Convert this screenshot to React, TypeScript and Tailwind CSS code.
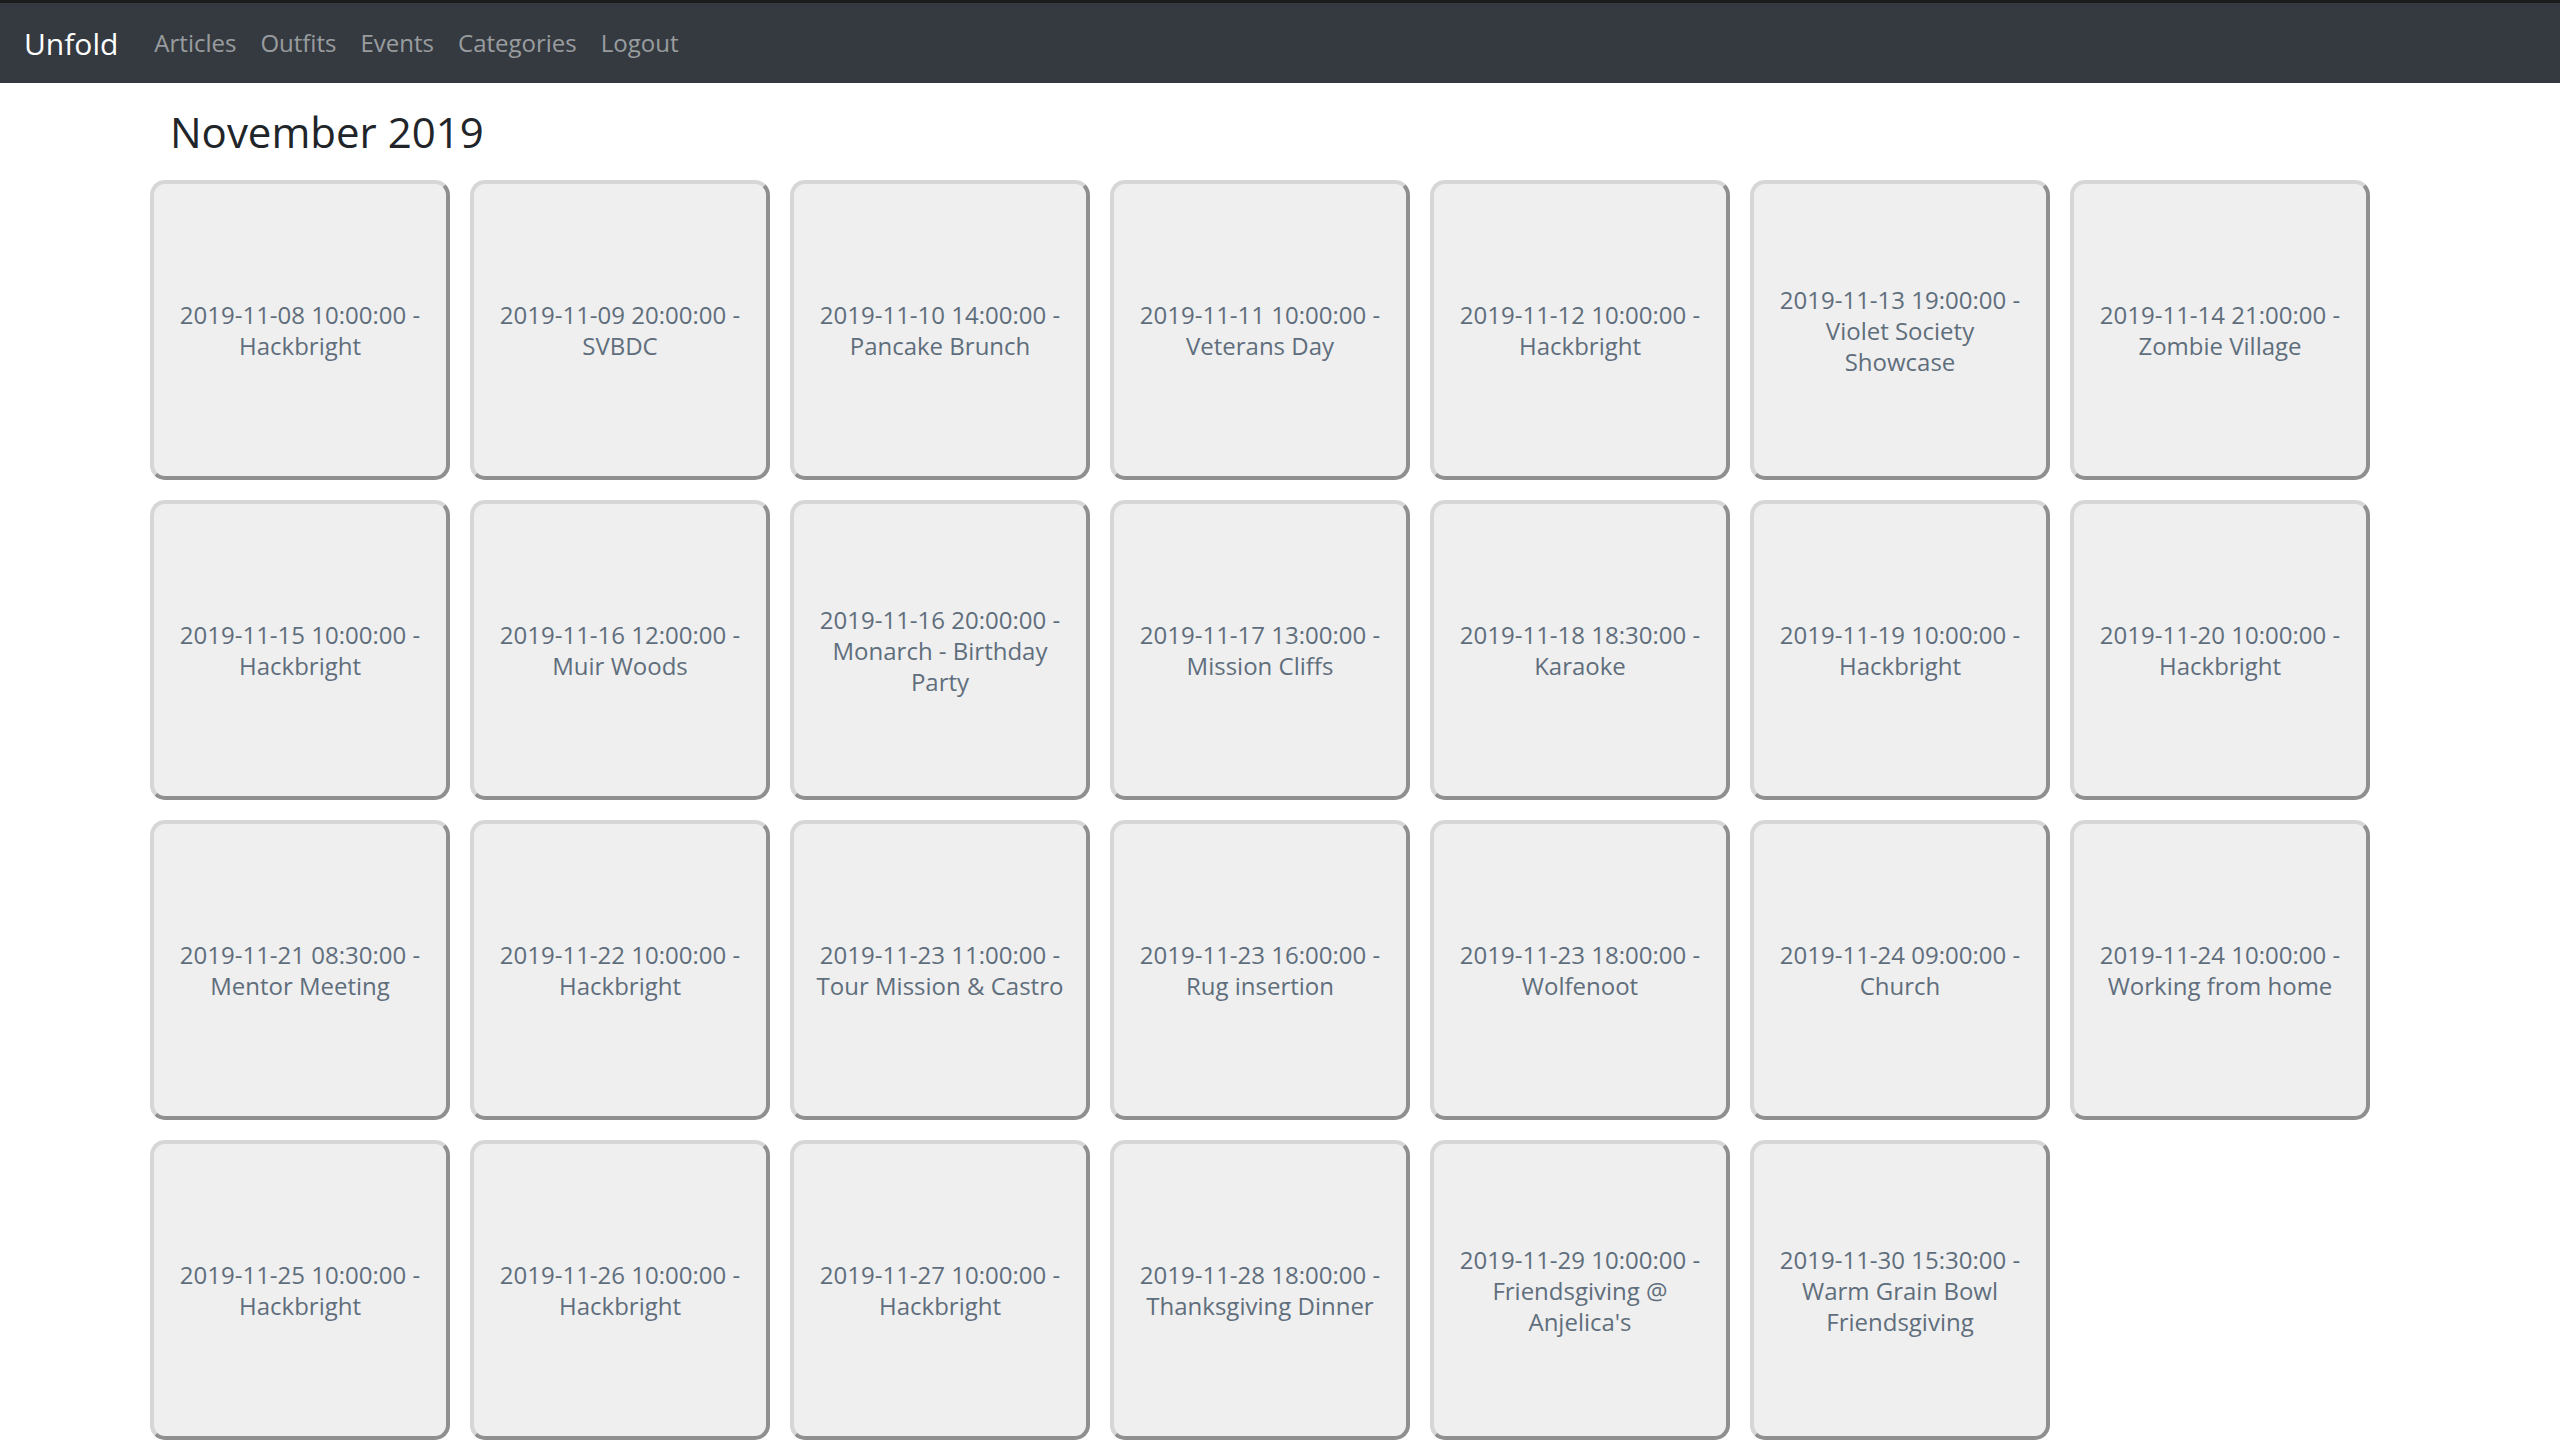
const links = ["Articles", "Outfits", "Events", "Categories", "Logout"];

const events = [
  "2019-11-08 10:00:00 - Hackbright",
  "2019-11-09 20:00:00 - SVBDC",
  "2019-11-10 14:00:00 - Pancake Brunch",
  "2019-11-11 10:00:00 - Veterans Day",
  "2019-11-12 10:00:00 - Hackbright",
  "2019-11-13 19:00:00 - Violet Society Showcase",
  "2019-11-14 21:00:00 - Zombie Village",
  "2019-11-15 10:00:00 - Hackbright",
  "2019-11-16 12:00:00 - Muir Woods",
  "2019-11-16 20:00:00 - Monarch - Birthday Party",
  "2019-11-17 13:00:00 - Mission Cliffs",
  "2019-11-18 18:30:00 - Karaoke",
  "2019-11-19 10:00:00 - Hackbright",
  "2019-11-20 10:00:00 - Hackbright",
  "2019-11-21 08:30:00 - Mentor Meeting",
  "2019-11-22 10:00:00 - Hackbright",
  "2019-11-23 11:00:00 - Tour Mission & Castro",
  "2019-11-23 16:00:00 - Rug insertion",
  "2019-11-23 18:00:00 - Wolfenoot",
  "2019-11-24 09:00:00 - Church",
  "2019-11-24 10:00:00 - Working from home",
  "2019-11-25 10:00:00 - Hackbright",
  "2019-11-26 10:00:00 - Hackbright",
  "2019-11-27 10:00:00 - Hackbright",
  "2019-11-28 18:00:00 - Thanksgiving Dinner",
  "2019-11-29 10:00:00 - Friendsgiving @ Anjelica's",
  "2019-11-30 15:30:00 - Warm Grain Bowl Friendsgiving",
];

export default function App() {
  return (
    <div className="min-h-screen bg-white font-['Open_Sans',sans-serif]">
      {/* top strip + navbar */}
      <div className="h-[3px] bg-[#1c1c1c]" />
      <nav className="flex h-20 items-center bg-[#343a40] px-6">
        <a href="#" className="mr-6 text-[30px] leading-[45px] text-white">
          Unfold
        </a>
        <div className="flex">
          {links.map((l) => (
            <a key={l} href="#" className="px-3 text-[24px] leading-9 text-white/50">
              {l}
            </a>
          ))}
        </div>
      </nav>

      <main className="px-[150px]">
        <h1 className="mt-6 pl-[20px] text-[42px] leading-[50px] text-[#212529]">November 2019</h1>

        {/* event cards */}
        <div className="mt-[23px] grid grid-cols-[repeat(7,300px)] gap-5">
          {events.map((e, i) => (
            <div
              key={i}
              className="flex h-[300px] items-center justify-center rounded-[15px] border-4 border-t-[#d6d6d6] border-l-[#d6d6d6] border-r-[#8f8f8f] border-b-[#8f8f8f] bg-[#efefef] px-[18px] text-center text-[24px] leading-[31px] text-[#5f6e7c]"
            >
              {e}
            </div>
          ))}
        </div>
      </main>
    </div>
  );
}
